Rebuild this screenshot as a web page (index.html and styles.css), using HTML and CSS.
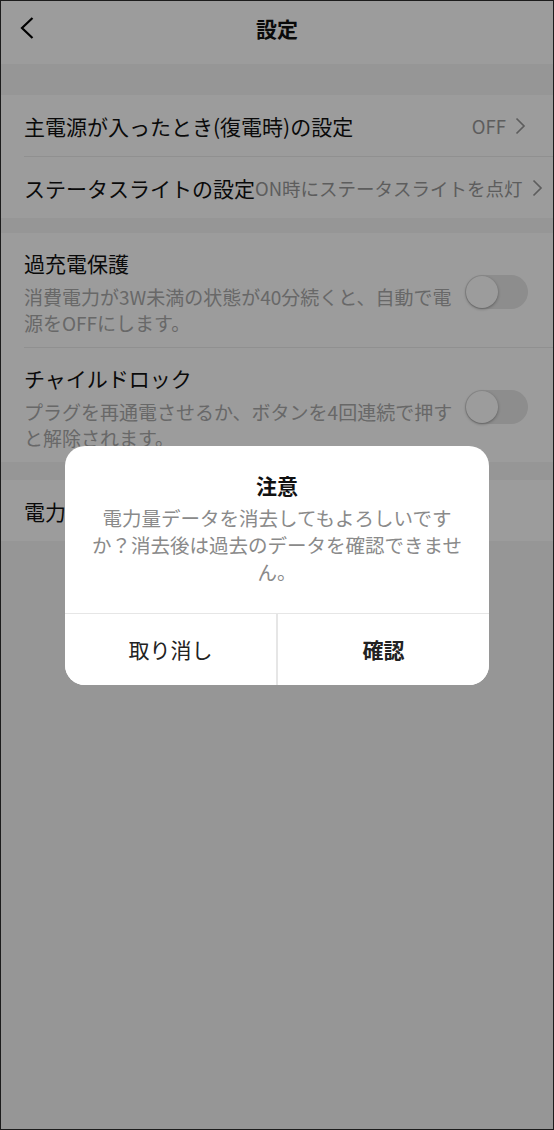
FILE: index.html
```html
<!DOCTYPE html>
<html lang="ja">
<head>
    <meta charset="utf-8" />
    <title>設定</title>
    <link rel="stylesheet" href="styles.css">
</head>
<body>
    <div class="screen">
        <header class="topbar">
            <span class="back">
                <svg width="14" height="22" viewBox="0 0 14 22"><path d="M12.5 1 L2 11 L12.5 21" fill="none" stroke="#000" stroke-width="2.2" /></svg>
            </span>
            <h1 class="title">設定</h1>
        </header>

        <section class="group first">
            <div class="row link">
                <span class="label">主電源が入ったとき(復電時)の設定</span>
                <span class="value">OFF<svg class="arrow" width="11" height="18" viewBox="0 0 11 18"><path d="M1.5 1.5 L9 9 L1.5 16.5" fill="none" stroke="#999" stroke-width="1.7" /></svg></span>
            </div>
            <div class="row link">
                <span class="label">ステータスライトの設定</span>
                <span class="value">ON時にステータスライトを点灯<svg class="arrow" width="11" height="18" viewBox="0 0 11 18"><path d="M1.5 1.5 L9 9 L1.5 16.5" fill="none" stroke="#999" stroke-width="1.7" /></svg></span>
            </div>
        </section>

        <section class="group">
            <div class="row switch-row">
                <div class="text">
                    <div class="label">過充電保護</div>
                    <p class="desc">消費電力が3W未満の状態が40分続くと、自動で電源をOFFにします。</p>
                </div>
                <span class="toggle"><span class="knob"></span></span>
            </div>
            <div class="row switch-row">
                <div class="text">
                    <div class="label">チャイルドロック</div>
                    <p class="desc">プラグを再通電させるか、ボタンを4回連続で押すと解除されます。</p>
                </div>
                <span class="toggle"><span class="knob"></span></span>
            </div>
        </section>

        <section class="group">
            <div class="row link">
                <span class="label">電力量データの消去</span>
            </div>
        </section>

        <div class="overlay">
            <div class="dialog">
                <div class="dialog-title">注意</div>
                <p class="dialog-msg">電力量データを消去してもよろしいですか？消去後は過去のデータを確認できません。</p>
                <div class="dialog-actions">
                    <button class="btn cancel">取り消し</button>
                    <button class="btn ok">確認</button>
                </div>
            </div>
        </div>
    </div>
</body>
</html>
```

FILE: styles.css
```css
body{
    margin:0;
    font-family:"Noto Sans CJK JP","Noto Sans",sans-serif;
    color:#111;
}
.screen{
    position:relative;
    width:554px;
    height:1130px;
    box-sizing:border-box;
    border:1px solid #1c1c1c;
    background-color:#f5f5f5;
    overflow:hidden;
}
.topbar{
    height:53px;
    padding-bottom:10px;
    background-color:#fff;
    display:flex;
    align-items:center;
    justify-content:center;
    position:relative;
}
.back{
    position:absolute;
    left:19px;
    top:16px;
    display:flex;
}
.title{
    margin:0;
    font-size:21px;
    font-weight:bold;
}
.group{
    background-color:#fff;
    margin-top:15px;
    padding-left:23px;
}
.group.first{
    margin-top:31px;
}
.group + .group + .group{
    margin-top:18px;
}
.row + .row{
    border-top:1px solid #ebebeb;
}
.row{
    display:flex;
    align-items:center;
}
.link{
    height:61px;
    padding-right:27px;
    white-space:nowrap;
}
.label{
    font-size:21px;
    line-height:30px;
    flex:none;
}
.value{
    margin-left:auto;
    flex:none;
    display:flex;
    align-items:center;
    font-size:18.5px;
    color:#999;
}
.arrow{
    margin-left:9px;
}
.switch-row{
    padding:15px 25px 11px 0;
}
.text{
    flex:1;
}
.desc{
    margin:6px 0 0 0;
    width:432px;
    font-size:19px;
    line-height:26px;
    color:#aaa;
}
.toggle{
    flex:none;
    width:63px;
    height:34px;
    border-radius:17px;
    background-color:#e6e6e6;
    display:flex;
    align-items:center;
    padding:0 1px;
    box-sizing:border-box;
}
.knob{
    width:32px;
    height:32px;
    border-radius:50%;
    background-color:#fff;
    box-shadow:0 1px 3px rgba(0,0,0,0.35);
}
.overlay{
    position:absolute;
    top:0;
    left:0;
    right:0;
    bottom:0;
    background-color:rgba(0,0,0,0.39);
    display:flex;
    align-items:center;
    justify-content:center;
}
.dialog{
    width:424px;
    background-color:#fff;
    border-radius:20px;
    text-align:center;
    overflow:hidden;
}
.dialog-title{
    padding-top:25px;
    font-size:21px;
    line-height:28px;
    font-weight:bold;
}
.dialog-msg{
    margin:5px 0 0 0;
    padding:0 20px 28px 20px;
    font-size:19.5px;
    line-height:27px;
    color:#8a8a8a;
}
.dialog-actions{
    display:flex;
    border-top:1px solid #e6e6e6;
}
.btn{
    flex:1;
    height:71px;
    border:0;
    background-color:#fff;
    font-family:inherit;
    font-size:21px;
    color:#222;
}
.btn + .btn{
    border-left:2px solid #e6e6e6;
}
.ok{
    font-weight:bold;
}
```
